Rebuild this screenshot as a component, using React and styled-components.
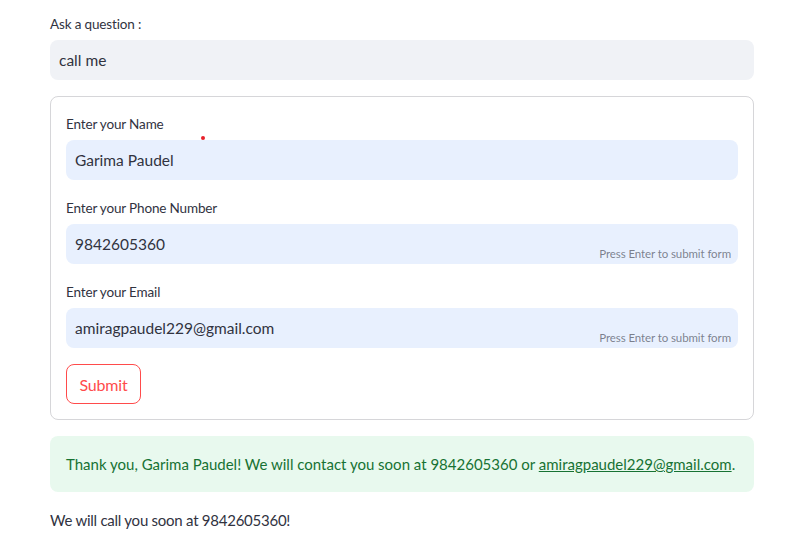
import styled, { createGlobalStyle } from "styled-components";

const GlobalStyle = createGlobalStyle`
  body {
    margin: 0;
    background: #ffffff;
    font-family: "Source Sans Pro", Lato, "Noto Sans", sans-serif;
    color: rgb(49, 51, 63);
  }
`;

const Page = styled.div`
  width: 704px;
  padding: 12px 0 20px 50px;
  display: flex;
  flex-direction: column;
  gap: 16px;
`;

const Field = styled.div`
  display: flex;
  flex-direction: column;
`;

const Label = styled.label`
  font-size: 13.5px;
  letter-spacing: -0.15px;
  line-height: 24px;
  margin-bottom: 4px;
  color: rgb(49, 51, 63);
`;

const InputBox = styled.div`
  position: relative;
  height: 40px;
  border-radius: 8px;
  background: ${(p) => (p.$autofill ? "rgb(232, 240, 254)" : "rgb(240, 242, 246)")};
  display: flex;
  align-items: center;
  padding: 0 9px;
  font-size: 15.5px;
  letter-spacing: 0;
  color: rgb(49, 51, 63);
`;

const Hint = styled.span`
  position: absolute;
  right: 7px;
  bottom: 2px;
  font-size: 11.5px;
  letter-spacing: -0.1px;
  line-height: 16px;
  color: rgba(49, 51, 63, 0.6);
`;

const Dot = styled.span`
  position: absolute;
  left: 135px;
  top: -4px;
  width: 4px;
  height: 4px;
  border-radius: 50%;
  background: #e8202a;
`;

const Form = styled.form`
  border: 1px solid rgba(49, 51, 63, 0.2);
  border-radius: 8px;
  padding: 15px;
  display: flex;
  flex-direction: column;
  gap: 16px;
`;

const SubmitButton = styled.button`
  align-self: flex-start;
  height: 40px;
  width: 75px;
  padding: 0;
  border: 1px solid rgb(255, 75, 75);
  border-radius: 8px;
  background: #ffffff;
  color: rgb(255, 75, 75);
  font-family: inherit;
  font-size: 16px;
  letter-spacing: -0.2px;
`;

const Success = styled.div`
  background: rgba(33, 195, 84, 0.1);
  color: rgb(23, 114, 51);
  border-radius: 8px;
  padding: 16px;
  font-size: 15px;
  letter-spacing: 0;
  line-height: 24px;

  a {
    color: inherit;
    text-decoration: underline;
  }
`;

const Text = styled.p`
  margin: 0;
  font-size: 15px;
  letter-spacing: -0.25px;
  line-height: 24px;
`;

const FormField = ({ label, value, hint, dot }) => (
  <Field>
    <Label>{label}</Label>
    <InputBox $autofill>
      {dot && <Dot />}
      {value}
      {hint && <Hint>Press Enter to submit form</Hint>}
    </InputBox>
  </Field>
);

export default function App() {
  return (
    <>
      <GlobalStyle />
      <Page>
        <Field>
          <Label>Ask a question :</Label>
          <InputBox>call me</InputBox>
        </Field>
        <Form onSubmit={(e) => e.preventDefault()}>
          <FormField label="Enter your Name" value="Garima Paudel" dot />
          <FormField label="Enter your Phone Number" value="9842605360" hint />
          <FormField label="Enter your Email" value="amiragpaudel229@gmail.com" hint />
          <SubmitButton type="submit">Submit</SubmitButton>
        </Form>
        <Success>
          Thank you, Garima Paudel! We will contact you soon at 9842605360 or{" "}
          <a href="mailto:amiragpaudel229@gmail.com">amiragpaudel229@gmail.com</a>.
        </Success>
        <Text>We will call you soon at 9842605360!</Text>
      </Page>
    </>
  );
}
